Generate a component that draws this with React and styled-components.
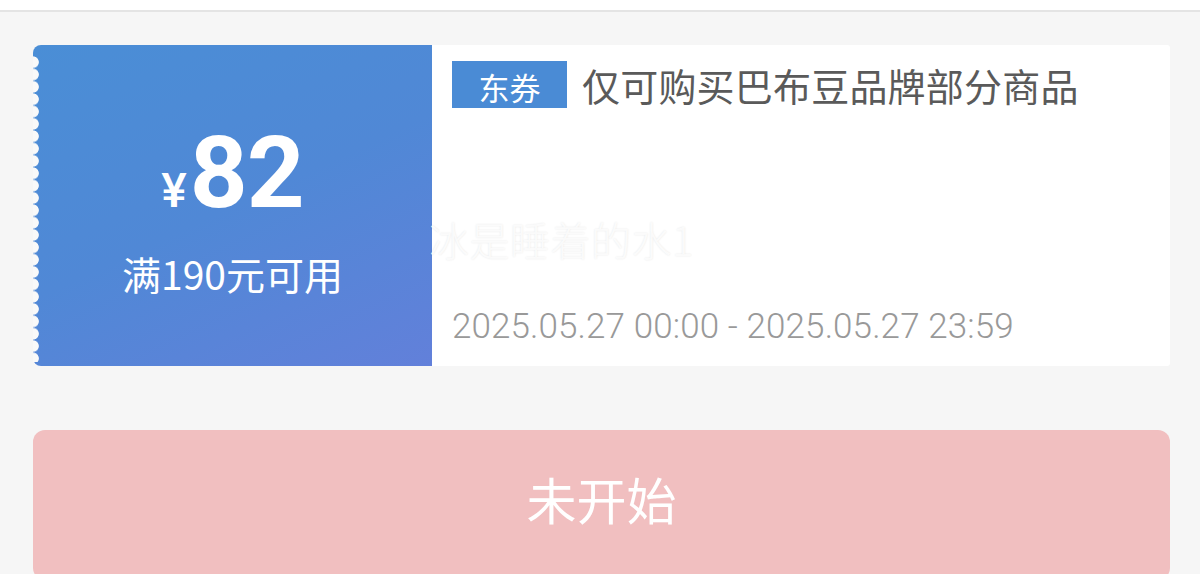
import React from 'react'
import styled, { createGlobalStyle } from 'styled-components'

const GlobalStyle = createGlobalStyle`
  html, body {
    margin: 0;
    padding: 0;
    background: #f6f6f6;
    overflow: hidden;
  }
  body {
    font-family: "Noto Sans CJK SC", Roboto, sans-serif;
  }
`

const App = () => {
  return (
    <>
      <GlobalStyle />
      <Page>
        <TopBar />
        <Content>
          <Coupon>
            <Amount>
              <Price>
                <Yen>¥</Yen>
                <Value>82</Value>
              </Price>
              <Condition>满190元可用</Condition>
            </Amount>
            <Info>
              <TitleRow>
                <Tag>东券</Tag>
                <Title>仅可购买巴布豆品牌部分商品</Title>
              </TitleRow>
              <Period>2025.05.27 00:00 - 2025.05.27 23:59</Period>
            </Info>
            <Watermark>冰是睡着的水1</Watermark>
          </Coupon>
          <Action>未开始</Action>
        </Content>
      </Page>
    </>
  )
}

export default App

const Page = styled.div`
  width: 1200px;
  height: 574px;
  overflow: hidden;
  background: #f6f6f6;
`

const TopBar = styled.div`
  height: 10px;
  background: #ffffff;
  border-bottom: 2px solid #e4e4e4;
`

const Content = styled.div`
  padding: 33px 30px 0 33px;
  display: flex;
  flex-direction: column;
  gap: 64px;
`

const Coupon = styled.div`
  position: relative;
  display: flex;
  height: 321px;
`

const Amount = styled.div`
  position: relative;
  width: 399px;
  flex-shrink: 0;
  display: flex;
  flex-direction: column;
  align-items: center;
  justify-content: center;
  padding-top: 4px;
  box-sizing: border-box;
  border-radius: 8px 0 0 8px;
  background: linear-gradient(155deg, #4a8ed6 0%, #5088d6 50%, #6280da 100%);
  color: #ffffff;

  &:before {
    position: absolute;
    content: '';
    top: 11px;
    bottom: 4px;
    left: 0;
    width: 8px;
    background-image: radial-gradient(circle at 0 50%, #f9f9f9 5.4px, transparent 6.2px);
    background-size: 8px 12.35px;
    background-repeat: repeat-y;
  }
`

const Price = styled.div`
  display: flex;
  align-items: baseline;
  font-family: Roboto, "Noto Sans", sans-serif;
  line-height: 1;
`

const Yen = styled.span`
  font-size: 48px;
  font-weight: 500;
  margin-right: 3px;
`

const Value = styled.span`
  font-size: 101px;
  font-weight: 700;
  letter-spacing: -1px;
`

const Condition = styled.div`
  margin-top: 31px;
  font-size: 39px;
  line-height: 1;
  font-weight: 400;
`

const Info = styled.div`
  flex: 1;
  background: #ffffff;
  border-radius: 0 3px 3px 0;
  padding: 16px 20px 22px 20px;
  display: flex;
  flex-direction: column;
  justify-content: space-between;
`

const TitleRow = styled.div`
  display: flex;
  align-items: center;
  gap: 15px;
`

const Tag = styled.span`
  width: 115px;
  height: 47px;
  display: flex;
  align-items: center;
  justify-content: center;
  background: #4a8bd5;
  color: #ffffff;
  font-size: 31px;
  padding-top: 3px;
  box-sizing: border-box;
`

const Title = styled.span`
  font-size: 38px;
  color: #5a5a5a;
  line-height: 1;
  letter-spacing: 0.2px;
`

const Period = styled.div`
  font-family: Roboto, "Noto Sans", sans-serif;
  font-size: 35px;
  font-weight: 300;
  color: #999999;
  line-height: 1;
  letter-spacing: 0.1px;
`

const Watermark = styled.div`
  position: absolute;
  left: 396px;
  top: 174px;
  font-size: 40px;
  font-weight: 300;
  line-height: 1;
  letter-spacing: 0.5px;
  color: rgba(255, 255, 255, 0.8);
  text-shadow: 0 0 2px rgba(0, 0, 0, 0.1);
  pointer-events: none;
`

const Action = styled.div`
  height: 150px;
  border-radius: 12px;
  background: #f1bfc0;
  color: #ffffff;
  font-size: 50px;
  display: flex;
  justify-content: center;
  padding-top: 32px;
  box-sizing: border-box;
`
